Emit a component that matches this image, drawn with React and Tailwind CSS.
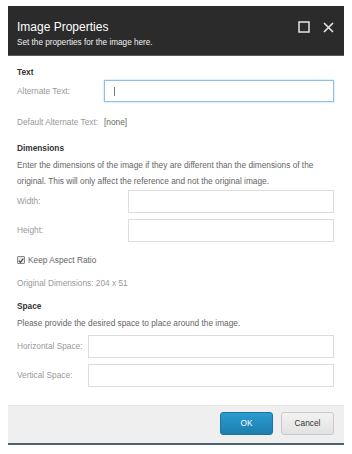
import React, { useState } from "react";

const font = { fontFamily: '"Liberation Sans", Arial, sans-serif' };

// Simple label + input row
const FieldRow = ({ label, labelWidth, value, onChange }) => (
  <div className="flex items-center">
    <label className={`${labelWidth} shrink-0 text-[#999]`}>{label}</label>
    <input
      type="text"
      value={value}
      onChange={onChange}
      className="flex-1 min-w-0 h-[23px] px-2 text-[8px] outline-none bg-white border border-[#dcdcdc]"
    />
  </div>
);

const App = () => {
  const [altText, setAltText] = useState("");
  const [width, setWidth] = useState("");
  const [height, setHeight] = useState("");
  const [hSpace, setHSpace] = useState("");
  const [vSpace, setVSpace] = useState("");
  const [keepRatio, setKeepRatio] = useState(true);

  return (
    <div className="w-[352px] h-[454px] bg-white pt-[6px] pl-[8px]" style={font}>
      <div className="w-[336px] flex flex-col">
        {/* Header */}
        <div className="h-[50px] bg-[#2b2b2b] border-b border-[#5a5a5a] flex items-start justify-between pl-[9px] pr-[10px]">
          <div className="flex flex-col pt-[14px]">
            <h2 className="text-[12px] leading-[14px] text-white">Image Properties</h2>
            <p className="text-[8.2px] leading-[10px] text-[#f0f0f0] mt-[4px]">
              Set the properties for the image here.
            </p>
          </div>
          <div className="flex items-center gap-[13px] pt-[15px]">
            <svg width="12" height="12" viewBox="0 0 12 12">
              <rect x="1" y="1" width="10" height="10" fill="none" stroke="#e6e6e6" strokeWidth="1.5" />
            </svg>
            <svg width="11" height="11" viewBox="0 0 11 11">
              <path d="M1 1 L10 10 M10 1 L1 10" stroke="#e6e6e6" strokeWidth="1.6" />
            </svg>
          </div>
        </div>

        {/* Body */}
        <div className="flex flex-col pl-[9px] pr-[10px] pb-[18px] text-[8.3px]">
          <h3 className="mt-[9px] leading-[14px] font-bold text-[#333]">Text</h3>
          <div className="mt-[1px] flex items-center h-[22px]">
            <label className="w-[87px] shrink-0 text-[#999]">Alternate Text:</label>
            <div className="relative flex-1 h-[22px] border border-[#8dbfe8] shadow-[0_0_2px_#a9d2f3] flex items-center px-[9px]">
              <input
                type="text"
                value={altText}
                onChange={(e) => setAltText(e.target.value)}
                className="w-full outline-none text-[8px] bg-transparent"
              />
              <span className="absolute left-[9px] top-[6px] w-px h-[9px] bg-[#777]"></span>
            </div>
          </div>
          <div className="mt-[13px] leading-[14px] flex">
            <span className="w-[87px] shrink-0 text-[#999]">Default Alternate Text:</span>
            <span className="text-[#666]">[none]</span>
          </div>

          <h3 className="mt-[12px] leading-[14px] font-bold text-[#333]">Dimensions</h3>
          <p className="mt-[2px] leading-[16px] text-[#666]">
            Enter the dimensions of the image if they are different than the dimensions of the
            <br />
            original. This will only affect the reference and not the original image.
          </p>
          <div className="mt-[1px]">
            <FieldRow label="Width:" labelWidth="w-[111px]" value={width} onChange={(e) => setWidth(e.target.value)} />
          </div>
          <div className="mt-[6px]">
            <FieldRow label="Height:" labelWidth="w-[111px]" value={height} onChange={(e) => setHeight(e.target.value)} />
          </div>
          <label className="mt-[11px] leading-[14px] flex items-center gap-[3px] text-[#666]">
            <span
              onClick={() => setKeepRatio(!keepRatio)}
              className="w-[8px] h-[8px] border border-[#888] bg-[#e6e6e6] rounded-[1px] flex items-center justify-center"
            >
              {keepRatio && (
                <svg width="7" height="7" viewBox="0 0 8 8">
                  <path d="M1 4.2 L3.2 6.4 L7 1.5" fill="none" stroke="#444" strokeWidth="1.6" />
                </svg>
              )}
            </span>
            Keep Aspect Ratio
          </label>
          <div className="mt-[9px] leading-[14px] text-[#999]">Original Dimensions: 204 x 51</div>

          <h3 className="mt-[9px] leading-[14px] font-bold text-[#333]">Space</h3>
          <p className="mt-[2px] leading-[16px] text-[#666]">
            Please provide the desired space to place around the image.
          </p>
          <div className="mt-[4px]">
            <FieldRow label="Horizontal Space:" labelWidth="w-[71px]" value={hSpace} onChange={(e) => setHSpace(e.target.value)} />
          </div>
          <div className="mt-[6px]">
            <FieldRow label="Vertical Space:" labelWidth="w-[71px]" value={vSpace} onChange={(e) => setVSpace(e.target.value)} />
          </div>
        </div>

        {/* Footer */}
        <div className="h-[40px] bg-[#efefef] border-t border-[#e4e4e4] border-b-2 border-b-[#4d6272] flex justify-end items-start gap-[8px] pt-[6px] pr-[10px]">
          <button className="w-[53px] h-[23px] rounded-[3px] text-[8.3px] text-white bg-gradient-to-b from-[#2a9bd0] to-[#1d7fae] border border-[#1b74a0]">
            OK
          </button>
          <button className="w-[53px] h-[23px] rounded-[3px] text-[8.3px] text-[#333] bg-gradient-to-b from-[#f2f2f2] to-[#e2e2e2] border border-[#c9c9c9]">
            Cancel
          </button>
        </div>
      </div>
    </div>
  );
};

export default App;
